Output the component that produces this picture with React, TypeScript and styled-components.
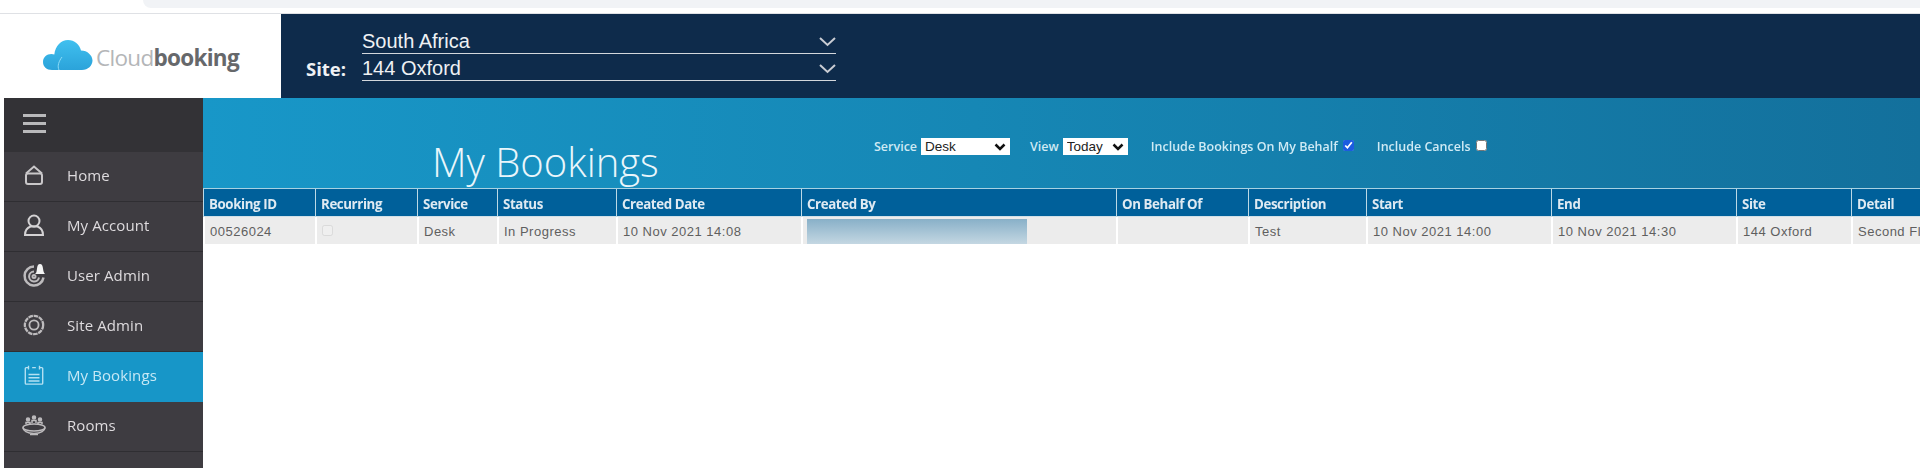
import React from "react";
import styled, { createGlobalStyle } from "styled-components";

const GlobalStyle = createGlobalStyle`
  html, body {
    margin: 0;
    padding: 0;
    background: #fff;
    overflow: hidden;
  }
`;

const columns = [
  { label: "Booking ID", width: 112, value: "00526024" },
  { label: "Recurring", width: 102, value: "" },
  { label: "Service", width: 80, value: "Desk" },
  { label: "Status", width: 119, value: "In Progress" },
  { label: "Created Date", width: 185, value: "10 Nov 2021 14:08" },
  { label: "Created By", width: 315, value: "" },
  { label: "On Behalf Of", width: 132, value: "" },
  { label: "Description", width: 118, value: "Test" },
  { label: "Start", width: 185, value: "10 Nov 2021 14:00" },
  { label: "End", width: 185, value: "10 Nov 2021 14:30" },
  { label: "Site", width: 115, value: "144 Oxford" },
  { label: "Detail", width: 180, value: "Second Floor" },
];

const HomeIcon = () => (
  <svg width="20" height="22" viewBox="0 0 20 22" fill="none" stroke="#c9c7c9" strokeWidth="2">
    <path d="M2 9.500 10 2.500l8 7" />
    <rect x="2" y="9.500" width="16" height="10.500" rx="2" />
  </svg>
);

const UserIcon = () => (
  <svg width="24" height="24" viewBox="0 0 24 24" fill="none" stroke="#d4d2d4" strokeWidth="2">
    <circle cx="12" cy="8" r="5.500" />
    <path d="M3 22c0-5 3-7.500 5.500-8.500h7C18 14.500 21 17 21 22z" />
  </svg>
);

const AdminIcon = () => (
  <svg width="24" height="26" viewBox="0 0 24 26" fill="none" stroke="#bdbbbd" strokeWidth="2">
    <path d="M12 4.500a9.500 9.500 0 1 0 9.500 11" strokeWidth="2.500" />
    <path d="M12 9.500a5 5 0 1 0 5 6" />
    <circle cx="12" cy="14.500" r="1.500" />
    <path d="M13 12c1.500-1 1.500-2 2-5.500C15.300 4 16 2 18 2s2.700 2 3 4.500c.3 2.500.8 4.500 2 5.500z" fill="#f4f4f4" stroke="none" />
  </svg>
);

const GearIcon = () => (
  <svg width="22" height="22" viewBox="0 0 24 24" fill="none" stroke="#bdbbbd">
    <circle cx="12" cy="12" r="10" strokeWidth="2.500" strokeDasharray="5 .8" />
    <circle cx="12" cy="12" r="5" strokeWidth="2" />
  </svg>
);

const CalendarIcon = () => (
  <svg width="22" height="22" viewBox="0 0 24 24" fill="none" stroke="#b5e1f2" strokeWidth="1.500">
    <path d="M6 4H3.500a1 1 0 0 0-1 1v16a1 1 0 0 0 1 1h17a1 1 0 0 0 1-1V5a1 1 0 0 0-1-1H18" />
    <path d="M6 2v4M18 2v4M10 4h4M6 11.500h12M6 15h12M6 18.500h12" />
  </svg>
);

const RoomsIcon = () => (
  <svg width="26" height="24" viewBox="0 0 26 24" fill="none" stroke="#bdbbbd" strokeWidth="1.500">
    <ellipse cx="13" cy="14.500" rx="11" ry="3.500" />
    <path d="M2 14.500c0 3 4 6 11 6s11-3 11-6M9 21.500h8" />
    <circle cx="7" cy="6.500" r="1.500" fill="#bdbbbd" />
    <circle cx="13" cy="4.500" r="1.500" fill="#bdbbbd" />
    <circle cx="19" cy="6.500" r="1.500" fill="#bdbbbd" />
    <path d="M5 11V9.500h4V11M11 10V7.500h4V10M17 11V9.500h4V11" />
  </svg>
);

const CloudLogo = () => (
  <svg width="50" height="34" viewBox="0 0 50 34">
    <defs>
      <linearGradient id="cloudFill" x1="0" y1="0" x2="0" y2="1">
        <stop offset="0" stopColor="#40c0ef" />
        <stop offset="1" stopColor="#2ba3da" />
      </linearGradient>
    </defs>
    <path
      d="M9 31C3.500 31 0 27.500 0 23s3.500-8 8.500-8c1 0 2 .2 2.800.5C12.500 6.500 18 1 25 1c6.500 0 11.500 4.500 13 10.500 6.500 0 11.500 5 11.500 10S45 31 39 31z"
      fill="url(#cloudFill)"
    />
    <path d="M16 31c-2-4 0-9 3-13" stroke="#8edcf7" strokeWidth="1" fill="none" />
  </svg>
);

const Chevron = () => (
  <svg width="17" height="10" viewBox="0 0 17 10" fill="none" stroke="#c9ccd3" strokeWidth="2">
    <path d="M1 1l7.500 7L16 1" />
  </svg>
);

const navItems = [
  { label: "Home", icon: <HomeIcon /> },
  { label: "My Account", icon: <UserIcon /> },
  { label: "User Admin", icon: <AdminIcon /> },
  { label: "Site Admin", icon: <GearIcon /> },
  { label: "My Bookings", icon: <CalendarIcon />, active: true },
  { label: "Rooms", icon: <RoomsIcon /> },
];

export default function App() {
  return (
    <Page>
      <GlobalStyle />
      <BrowserStrip>
        <AddressBar />
      </BrowserStrip>
      <Header>
        <LogoBox>
          <CloudLogo />
          <LogoText>
            Cloud<b>booking</b>
          </LogoText>
        </LogoBox>
        <SiteLabel>Site:</SiteLabel>
        <SitePickers>
          <SitePicker>
            South Africa
            <Chevron />
          </SitePicker>
          <SitePicker>
            144 Oxford
            <Chevron />
          </SitePicker>
        </SitePickers>
      </Header>
      <Body>
        <Sidebar>
          <Burger>
            <BurgerBar />
            <BurgerBar />
            <BurgerBar />
          </Burger>
          {navItems.map((item) => (
            <NavItem key={item.label} $active={item.active}>
              <NavIcon>{item.icon}</NavIcon>
              {item.label}
            </NavItem>
          ))}
          <NavItem />
        </Sidebar>
        <Main>
          <Banner>
            <Title>My Bookings</Title>
            <Filters>
              <Filter>
                Service
                <Select $width={89} defaultValue="Desk">
                  <option>Desk</option>
                </Select>
              </Filter>
              <Filter>
                View
                <Select $width={65} defaultValue="Today">
                  <option>Today</option>
                </Select>
              </Filter>
              <Filter $spaced>
                Include Bookings On My Behalf
                <Check type="checkbox" defaultChecked />
              </Filter>
              <Filter $spaced>
                Include Cancels
                <Check type="checkbox" />
              </Filter>
            </Filters>
          </Banner>
          <Table>
            <colgroup>
              {columns.map((c) => (
                <col key={c.label} width={c.width} />
              ))}
            </colgroup>
            <thead>
              <tr>
                {columns.map((c) => (
                  <HeadCell key={c.label}>{c.label}</HeadCell>
                ))}
              </tr>
            </thead>
            <tbody>
              <tr>
                {columns.map((c) => (
                  <Cell key={c.label}>
                    {c.label === "Recurring" && <RowCheck type="checkbox" disabled />}
                    {c.label === "Created By" && <Redacted />}
                    {c.value}
                  </Cell>
                ))}
              </tr>
            </tbody>
          </Table>
        </Main>
      </Body>
    </Page>
  );
}

const Page = styled.div`
  width: 1920px;
  height: 468px;
  overflow: hidden;
  filter: blur(0.45px);
`;

const BrowserStrip = styled.div`
  height: 13px;
  border-bottom: 1px solid #dfe1e5;
  padding-left: 143px;
`;

const AddressBar = styled.div`
  height: 8px;
  background: #f1f3f6;
  border-radius: 0 0 0 10px;
`;

const Header = styled.header`
  height: 84px;
  margin-left: 4px;
  display: flex;
  align-items: stretch;
  background: #0e2b4b;
`;

const LogoBox = styled.div`
  width: 277px;
  background: #fff;
  display: flex;
  align-items: center;
  gap: 3px;
  padding-left: 39px;
  box-sizing: border-box;
`;

const LogoText = styled.span`
  font-family: "Open Sans", sans-serif;
  font-size: 22.500px;
  letter-spacing: -0.7px;
  color: #b4b6b8;
  margin-top: 2px;

  b {
    font-weight: 700;
    color: #66686b;
  }
`;

const SiteLabel = styled.div`
  flex: none;
  width: 56px;
  align-self: flex-end;
  margin: 0 0 18px 25px;
  font-family: "Open Sans", sans-serif;
  font-weight: 700;
  font-size: 18.500px;
  line-height: 22px;
  color: #eef1f4;
`;

const SitePickers = styled.div`
  width: 474px;
  padding-top: 14px;
  display: flex;
  flex-direction: column;
  gap: 1px;
`;

const SitePicker = styled.div`
  height: 23px;
  padding-top: 2px;
  display: flex;
  align-items: center;
  justify-content: space-between;
  border-bottom: 1px solid #d3d7dc;
  font-family: "Liberation Sans", Arial, sans-serif;
  font-size: 20px;
  line-height: 27px;
  color: #eef1f4;
`;

const Body = styled.div`
  display: flex;
  margin-left: 4px;
`;

const Sidebar = styled.nav`
  flex: none;
  width: 199px;
  height: 370px;
  overflow: hidden;
  background: #3e3c41;
`;

const Burger = styled.div`
  height: 54px;
  background: #333236;
  padding: 16px 0 0 19px;
  box-sizing: border-box;
  display: flex;
  flex-direction: column;
  gap: 5px;
`;

const BurgerBar = styled.span`
  width: 23px;
  height: 3px;
  background: #b9b9bb;
`;

const NavItem = styled.a<{ $active?: boolean }>`
  height: 50px;
  padding-bottom: 3px;
  box-sizing: border-box;
  display: flex;
  align-items: center;
  border-bottom: 1px solid ${(p) => (p.$active ? "#1796c8" : "#2f2e32")};
  background: ${(p) => (p.$active ? "#1796c8" : "#3e3c41")};
  font-family: "Open Sans", sans-serif;
  font-size: 15px;
  letter-spacing: 0.1px;
  color: ${(p) => (p.$active ? "#c6e8f5" : "#dedbde")};
`;

const NavIcon = styled.span`
  width: 63px;
  box-sizing: border-box;
  display: flex;
  justify-content: center;
  padding-right: 3px;
  flex: none;
`;

const Main = styled.main`
  flex: 1;
  min-width: 0;
  overflow: hidden;
`;

const Banner = styled.div`
  height: 90px;
  box-sizing: border-box;
  display: flex;
  background: linear-gradient(90deg, #1897c8 0%, #1687b5 45%, #13709c 100%);
  padding-left: 229px;
`;

const Title = styled.h1`
  margin: 0;
  padding-top: 39px;
  width: 442px;
  flex: none;
  font-family: "Open Sans", sans-serif;
  font-weight: 300;
  font-size: 40px;
  line-height: 50px;
  color: #eaf6fb;
  white-space: nowrap;
`;

const Filters = styled.div`
  display: flex;
  align-items: flex-start;
  gap: 20px;
  padding-top: 40px;
`;

const Filter = styled.label<{ $spaced?: boolean }>`
  display: flex;
  align-items: center;
  gap: 4px;
  height: 17px;
  margin-left: ${(p) => (p.$spaced ? "3px" : "0")};
  font-family: "Open Sans", sans-serif;
  font-weight: 600;
  font-size: 12.500px;
  color: #cfeaf4;
  white-space: nowrap;
`;

const Select = styled.select<{ $width: number }>`
  width: ${(p) => p.$width}px;
  height: 17px;
  padding: 0 0 0 4px;
  border: none;
  border-radius: 0;
  appearance: none;
  background: #fff url("data:image/svg+xml,%3Csvg xmlns='http://www.w3.org/2000/svg' width='12' height='8' viewBox='0 0 12 8'%3E%3Cpath d='M1.500 1.500 6 6l4.500-4.500' fill='none' stroke='%23111' stroke-width='2.500'/%3E%3C/svg%3E") no-repeat right 4px center;
  color: #222;
  font-family: "Liberation Sans", Arial, sans-serif;
  font-size: 13.500px;
`;

const Check = styled.input`
  width: 11px;
  height: 11px;
  margin: 0 0 3px 1px;
  accent-color: #1c5ce0;
`;

const Table = styled.table`
  border-collapse: separate;
  border-spacing: 0;
  table-layout: fixed;
  width: 1828px;
  border-top: 1px solid #a8d2e2;
`;

const HeadCell = styled.th`
  height: 28px;
  padding: 2px 0 0 5px;
  box-sizing: border-box;
  background: #00609a;
  border-left: 1px solid #bcd9e6;
  border-bottom: 1px solid #cfe0e8;
  text-align: left;
  font-family: "Open Sans", sans-serif;
  font-weight: 700;
  font-size: 13.300px;
  letter-spacing: -0.4px;
  color: #dfeaf2;
  white-space: nowrap;
`;

const Cell = styled.td`
  height: 27px;
  padding: 2px 0 0 5px;
  box-sizing: border-box;
  position: relative;
  background: #ececec;
  border-left: 2px solid #fff;
  font-family: "Liberation Sans", Arial, sans-serif;
  font-size: 13px;
  letter-spacing: 0.5px;
  color: #5f5f5f;
  white-space: nowrap;
`;

const RowCheck = styled.input`
  width: 11px;
  height: 11px;
  margin: 0 0 4px 0;
  opacity: 0.5;
`;

const Redacted = styled.div`
  position: absolute;
  left: 4px;
  top: 2px;
  bottom: 0;
  width: 220px;
  background: linear-gradient(180deg, #88b0c8 0%, #c4d7e2 100%);
`;
